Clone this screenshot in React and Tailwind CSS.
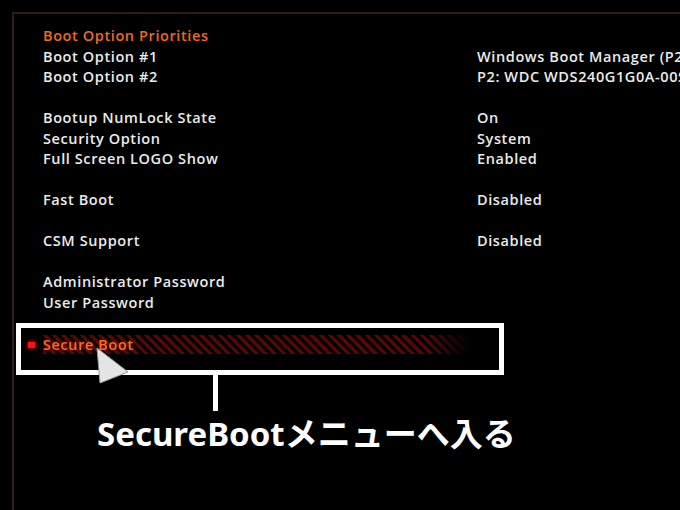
import React from "react";

const rows = [
  { l: "Boot Option Priorities", orange: true },
  { l: "Boot Option #1", r: "Windows Boot Manager (P2: WDC WDS240G1G0A-00SS50)" },
  { l: "Boot Option #2", r: "P2: WDC WDS240G1G0A-00SS50" },
  { l: "" },
  { l: "Bootup NumLock State", r: "On" },
  { l: "Security Option", r: "System" },
  { l: "Full Screen LOGO Show", r: "Enabled" },
  { l: "" },
  { l: "Fast Boot", r: "Disabled" },
  { l: "" },
  { l: "CSM Support", r: "Disabled" },
  { l: "" },
  { l: "Administrator Password" },
  { l: "User Password" },
];

export default function App() {
  return (
    <div className="w-[680px] h-[510px] bg-black overflow-hidden relative flex pl-[12px] pt-[12px]">
      <div className="flex-1 min-w-0 border-l-2 border-t-2 border-[#2b2019] pl-[2px] pt-[12px] flex flex-col overflow-hidden">
        <div className="flex flex-col pl-[27px] font-['Open_Sans',sans-serif] font-semibold text-[14.5px] tracking-[0.6px] leading-[20.5px] text-[#ebebeb] whitespace-nowrap">
          {rows.map((row, i) => (
            <div key={i} className="flex h-[20.5px]">
              <div className={`w-[434px] shrink-0 ${row.orange ? "text-[#ee6a1c]" : ""}`}>{row.l}</div>
              <div>{row.r || ""}</div>
            </div>
          ))}
        </div>

        <div className="mt-[10px] w-[488px] h-[52px] border-[5px] border-white pl-[7px] pt-[7px]">
          <div className="flex items-center gap-[8px] h-[19px]">
            <div className="w-[7px] h-[6px] bg-[#ff1010] shadow-[0_0_4px_#ff2020] shrink-0" />
            <div className="w-[427px] h-[19px] flex items-center bg-[repeating-linear-gradient(45deg,#4e0805_0px,#5a0a06_2.5px,#0a0000_3.8px,#000000_6.5px)] [mask-image:linear-gradient(to_right,black_90%,transparent)]">
              <span className="font-['Open_Sans',sans-serif] font-semibold text-[14.5px] tracking-[0.6px] leading-[19px] text-[#ff6a1e] [text-shadow:0_0_3px_#a02000]">Secure Boot</span>
            </div>
          </div>
        </div>

        <div className="ml-[197px] w-[5px] h-[36px] bg-white" />

        <div className="ml-[81px] mt-[3px] text-white font-bold text-[33px] leading-[40px] font-['Noto_Sans','Noto_Sans_CJK_JP',sans-serif] whitespace-nowrap">
          SecureBootメニューへ入る
        </div>
      </div>

      <svg className="absolute left-[95px] top-[345px]" width="40" height="42" viewBox="0 0 40 42">
        <polygon points="2,3 33,27 5,38" fill="#e4e4e4" stroke="#9a9a9a" strokeWidth="1" />
      </svg>
    </div>
  );
}
